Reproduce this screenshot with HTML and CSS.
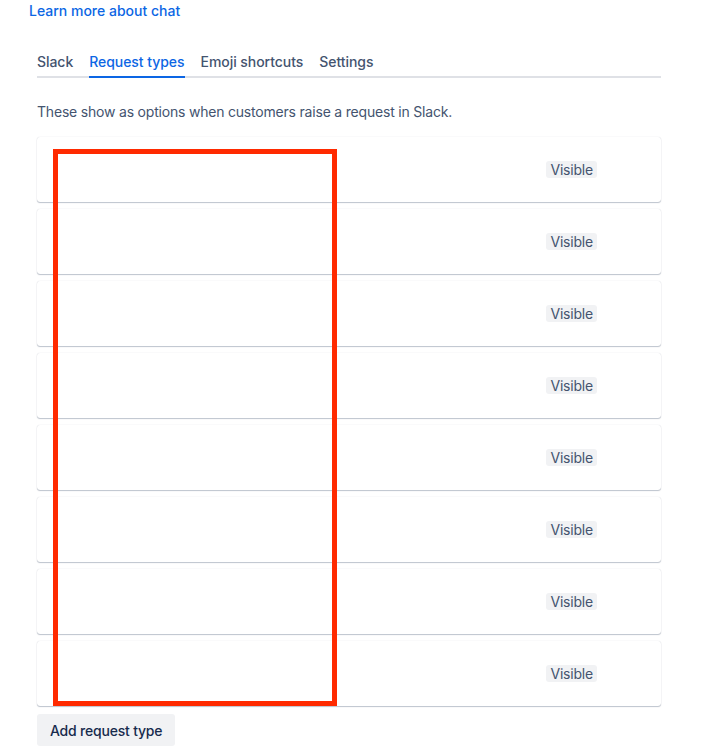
FILE: index.html
```html
<!DOCTYPE html>
<html lang="en">
<head>
  <meta charset="UTF-8" />
  <title>Request types</title>
  <link rel="stylesheet" href="styles.css">
</head>
<body>
  <div class="page">
    <a class="learn" href="#">Learn more about chat</a>

    <div class="tabs">
      <span class="tab">Slack</span>
      <span class="tab active">Request types</span>
      <span class="tab">Emoji shortcuts</span>
      <span class="tab">Settings</span>
    </div>

    <p class="desc">These show as options when customers raise a request in Slack.</p>

    <div class="list">
      <div class="card"><span class="name"></span><span class="badge">Visible</span></div>
      <div class="card"><span class="name"></span><span class="badge">Visible</span></div>
      <div class="card"><span class="name"></span><span class="badge">Visible</span></div>
      <div class="card"><span class="name"></span><span class="badge">Visible</span></div>
      <div class="card"><span class="name"></span><span class="badge">Visible</span></div>
      <div class="card"><span class="name"></span><span class="badge">Visible</span></div>
      <div class="card"><span class="name"></span><span class="badge">Visible</span></div>
      <div class="card"><span class="name"></span><span class="badge">Visible</span></div>
      <div class="redact"></div>
    </div>

    <button class="add" type="button">Add request type</button>
  </div>
</body>
</html>
```

FILE: styles.css
```css
body {
  margin: 0;
  background: #fff;
  font-family: Inter, "Noto Sans", sans-serif;
  font-size: 14px;
  letter-spacing: -0.2px;
  color: #172b4d;
}

.page {
  width: 624px;
  padding: 2px 0 0 37px;
}

.learn {
  display: inline-block;
  margin-left: -8px;
  color: #0c66e4;
  font-weight: 500;
  letter-spacing: 0;
  text-decoration: none;
  line-height: 18px;
}

.tabs {
  display: flex;
  gap: 16px;
  margin-top: 32px;
  border-bottom: 2px solid #dfe1e6;
}

.tab {
  color: #44546f;
  font-weight: 500;
  letter-spacing: -0.05px;
  line-height: 20px;
  padding-bottom: 4px;
  margin-bottom: -2px;
  border-bottom: 2px solid transparent;
}

.tab.active {
  color: #0c66e4;
  border-bottom-color: #0c66e4;
}

.desc {
  margin: 24px 0 15px;
  color: #44546f;
  line-height: 20px;
}

.list {
  position: relative;
  display: flex;
  flex-direction: column;
  gap: 7px;
}

.card {
  height: 65px;
  box-sizing: border-box;
  display: flex;
  align-items: center;
  justify-content: space-between;
  border-radius: 3px;
  box-shadow: 0 1px 1px rgba(9, 30, 66, 0.25), 0 0 1px rgba(9, 30, 66, 0.2);
}

.badge {
  margin-right: 64px;
  padding: 0 4px;
  background: #f1f2f4;
  color: #44546f;
  border-radius: 3px;
  line-height: 17px;
}

.redact {
  position: absolute;
  left: 16px;
  top: 12px;
  width: 274px;
  height: 547px;
  border: 5px solid #ff2a00;
}

.add {
  margin-top: 8px;
  height: 32px;
  padding: 0 13px;
  background: #f1f2f4;
  color: #172b4d;
  font-family: inherit;
  font-size: 14px;
  letter-spacing: -0.2px;
  font-weight: 500;
  border: none;
  border-radius: 3px;
}
```
